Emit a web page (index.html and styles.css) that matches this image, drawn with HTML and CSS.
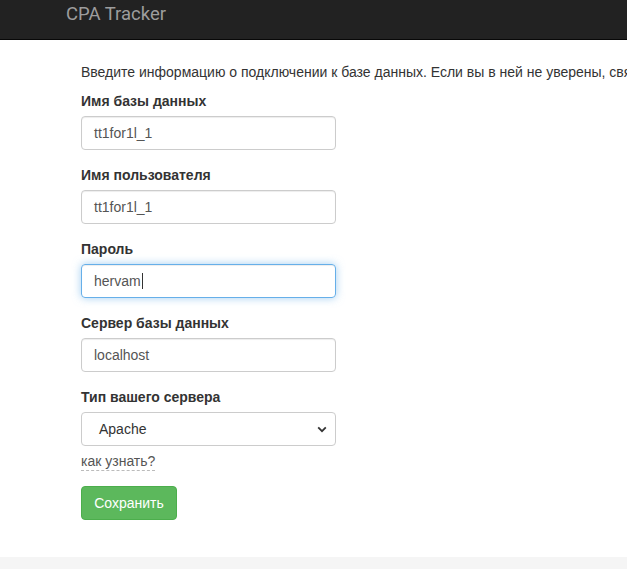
FILE: index.html
```html
<!DOCTYPE html>
<html lang="ru">
<head>
<meta charset="utf-8">
<title>CPA Tracker</title>
<link rel="stylesheet" href="styles.css">
</head>
<body>
<div class="navbar">
  <span class="brand">CPA Tracker</span>
</div>
<div class="page">
  <p class="intro">Введите информацию о подключении к базе данных. Если вы в ней не уверены, свяжитесь с вашим хостинг-провайдером.</p>
  <form class="form">
    <div class="group">
      <label class="label">Имя базы данных</label>
      <div class="control">tt1for1l_1</div>
    </div>
    <div class="group">
      <label class="label">Имя пользователя</label>
      <div class="control">tt1for1l_1</div>
    </div>
    <div class="group">
      <label class="label">Пароль</label>
      <div class="control focus">hervam<span class="caret"></span></div>
    </div>
    <div class="group">
      <label class="label">Сервер базы данных</label>
      <div class="control">localhost</div>
    </div>
    <div class="group last">
      <label class="label">Тип вашего сервера</label>
      <div class="control select"><span>Apache</span>
        <svg class="chev" width="10" height="7" viewBox="0 0 10 7"><path d="M1.2 1.4 L5 5.2 L8.8 1.4" fill="none" stroke="#333" stroke-width="1.8"/></svg>
      </div>
    </div>
    <a class="howto">как узнать?</a>
    <div class="btn">Сохранить</div>
  </form>
</div>
<div class="footer"></div>
</body>
</html>
```

FILE: styles.css
```css
html, body {
  margin: 0;
  padding: 0;
  height: 100%;
  overflow: hidden;
}
body {
  font-family: "Liberation Sans", Arial, sans-serif;
  font-size: 14px;
  line-height: 20px;
  color: #333;
  background: #fff;
  display: flex;
  flex-direction: column;
}
.navbar {
  height: 40px;
  background: #222;
  border-bottom: 1px solid #080808;
  box-sizing: border-box;
  flex: none;
}
.brand {
  display: block;
  padding-left: 66px;
  padding-top: 3px;
  font-family: Roboto, "Liberation Sans", sans-serif;
  font-size: 18.5px;
  line-height: 22px;
  color: #9d9d9d;
}
.page {
  padding: 22px 0 0 81px;
  flex: 1;
}
.intro {
  margin: 0 0 9px 0;
  white-space: nowrap;
}
.form {
  margin: 0;
}
.group {
  margin-bottom: 15px;
}
.group.last {
  margin-bottom: 5px;
}
.label {
  display: block;
  font-weight: bold;
  margin-bottom: 5px;
}
.control {
  width: 255px;
  height: 34px;
  box-sizing: border-box;
  border: 1px solid #ccc;
  border-radius: 4px;
  padding: 6px 12px;
  color: #555;
  box-shadow: inset 0 1px 1px rgba(0,0,0,.075);
  display: flex;
  align-items: center;
}
.control.focus {
  border-color: #66afe9;
  box-shadow: inset 0 1px 1px rgba(0,0,0,.075), 0 0 8px rgba(102,175,233,.6);
}
.caret {
  display: inline-block;
  width: 1px;
  height: 16px;
  background: #333;
  margin-left: 1px;
}
.control.select {
  justify-content: space-between;
  padding-left: 17px;
  padding-right: 8px;
  box-shadow: none;
  color: #333;
}
.howto {
  display: inline-block;
  color: #555;
  border-bottom: 1px dashed #bbb;
  line-height: 18px;
  margin-bottom: 15px;
}
.btn {
  width: 96px;
  height: 34px;
  box-sizing: border-box;
  background: #5cb85c;
  border: 1px solid #4cae4c;
  border-radius: 4px;
  color: #fff;
  display: flex;
  align-items: center;
  justify-content: center;
}
.footer {
  height: 12px;
  background: #f5f5f5;
  flex: none;
}
```
